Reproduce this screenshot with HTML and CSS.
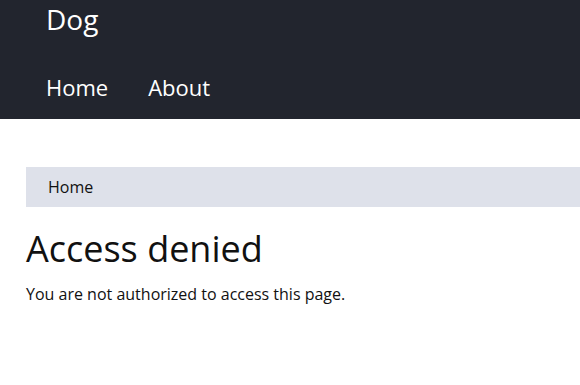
FILE: index.html
```html
<!DOCTYPE html>
<html lang="en">
<head>
    <meta charset="UTF-8">
    <meta name="viewport" content="width=device-width, initial-scale=1.0">
    <title>Access denied | Dog</title>
    <link rel="stylesheet" href="styles.css">
</head>
<body>
    <!-- Site header -->
    <header class="site-header">
        <div class="site-name">Dog</div>
        <nav class="main-nav">
            <a href="/" class="nav-link">Home</a>
            <a href="/about" class="nav-link">About</a>
        </nav>
    </header>

    <main class="page-content">
        <div class="breadcrumb">
            <a href="/" class="breadcrumb-link">Home</a>
        </div>

        <h1 class="page-title">Access denied</h1>
        <p class="page-message">You are not authorized to access this page.</p>
    </main>
</body>
</html>
```

FILE: styles.css
```css
body {
    font-family: 'Open Sans', 'Noto Sans', sans-serif;
    color: #111;
    background-color: #fff;
    margin: 0;
}

/* Header */
.site-header {
    background-color: #22252e;
    color: #fff;
    padding: 0 26px 7px 26px;
}

.site-name {
    font-size: 28px;
    line-height: 38px;
    padding-left: 20px;
}

.main-nav {
    display: flex;
    margin-top: 24px;
}

.nav-link {
    color: #fff;
    text-decoration: none;
    font-size: 22px;
    line-height: 30px;
    padding: 10px 20px;
}

/* Content */
.page-content {
    padding: 48px 0 0 26px;
}

.breadcrumb {
    background-color: #dee1ea;
    font-size: 16px;
    line-height: 22px;
    padding: 9px 22px;
}

.breadcrumb-link {
    color: #111;
    text-decoration: none;
}

.page-title {
    font-size: 36px;
    font-weight: normal;
    line-height: 49px;
    margin: 17px 0 10px 0;
}

.page-message {
    font-size: 16px;
    line-height: 22px;
    margin: 0;
}
```
